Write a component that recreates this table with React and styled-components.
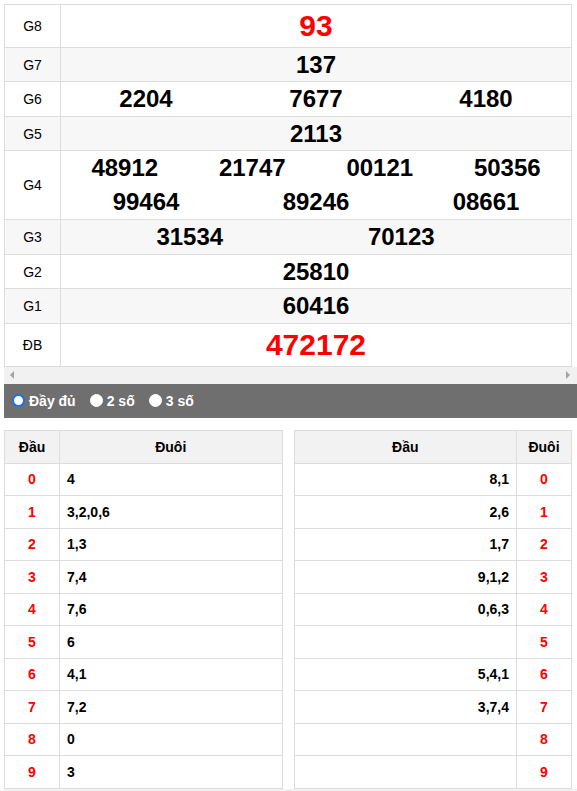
import styled, { createGlobalStyle } from "styled-components";

const GlobalStyle = createGlobalStyle`
  html, body {
    margin: 0;
    padding: 0;
    background: #fff;
    font-family: "Liberation Sans", Arial, sans-serif;
    color: #000;
  }
`;

const Page = styled.div`
  padding: 4px 0 0 4px;
`;

const ScrollBox = styled.div`
  width: 573px;
`;

const Results = styled.div`
  width: 568px;
  border-top: 1px solid #ddd;
`;

const Row = styled.div`
  display: flex;
  border-left: 1px solid #ddd;
  border-bottom: 1px solid #ddd;
  background: ${(p) => (p.$alt ? "#f7f7f7" : "#fff")};
`;

const Label = styled.div`
  width: 56px;
  flex: none;
  box-sizing: border-box;
  border-right: 1px solid #ddd;
  display: flex;
  align-items: center;
  justify-content: center;
  font-size: 14px;
  line-height: 16px;
`;

const Value = styled.div`
  flex: 1;
  border-right: 1px solid #ddd;
`;

const Numbers = styled.div`
  display: grid;
  grid-template-columns: repeat(${(p) => p.$cols}, 1fr);
  padding: ${(p) => p.$pad || "0"};
  text-align: center;
  font-weight: bold;
  font-size: ${(p) => (p.$big ? "30px" : "24px")};
  line-height: ${(p) => (p.$big ? "42px" : p.$lh || "33.45px")};
  color: ${(p) => (p.$big ? "#f00" : "#000")};
`;

const Scrollbar = styled.div`
  height: 17px;
  background: #f1f1f1;
  display: flex;
  align-items: center;
  justify-content: space-between;
  padding: 0 7px 0 6px;
`;

const Arrow = styled.span`
  width: 0;
  height: 0;
  border-top: 4px solid transparent;
  border-bottom: 4px solid transparent;
  ${(p) =>
    p.$right
      ? "border-left: 4px solid #a3a3a3;"
      : "border-right: 4px solid #a3a3a3;"}
`;

const ModeBar = styled.div`
  width: 573px;
  height: 34px;
  background: #6f6f6f;
  display: flex;
  align-items: center;
  gap: 14px;
  padding-left: 8px;
  box-sizing: border-box;
`;

const Option = styled.label`
  display: flex;
  align-items: center;
  gap: 4px;
  color: #fff;
  font-weight: bold;
  font-size: 14px;
`;

const Radio = styled.span`
  width: 13px;
  height: 13px;
  box-sizing: border-box;
  border-radius: 50%;
  background: #fff;
  border: ${(p) => (p.$checked ? "2px solid #1a73e8" : "1px solid #fff")};
`;

const LotoWrap = styled.div`
  display: flex;
  gap: 11px;
  margin-top: 12px;
  width: 568px;
`;

const LotoTable = styled.div`
  width: 279px;
  border-top: 1px solid #ddd;
  border-left: 1px solid #ddd;
  box-sizing: border-box;
`;

const LotoRow = styled.div`
  display: grid;
  grid-template-columns: ${(p) => (p.$rev ? "1fr 55px" : "55px 1fr")};
  height: ${(p) => (p.$head ? "33px" : "32.5px")};
  background: ${(p) => (p.$head ? "#f2f2f2" : "#fff")};
`;

const Cell = styled.div`
  border-right: 1px solid #ddd;
  border-bottom: 1px solid #ddd;
  display: flex;
  align-items: center;
  justify-content: ${(p) => p.$align || "center"};
  padding: 0 7px;
  font-size: 14px;
  font-weight: bold;
  color: ${(p) => (p.$red ? "#f00" : "#000")};
`;

const BottomBar = styled.div`
  height: 17px;
  width: 573px;
  background: #f1f1f1;
`;

const prizes = [
  { label: "G8", lines: [["93"]], big: true },
  { label: "G7", lines: [["137"]] },
  { label: "G6", lines: [["2204", "7677", "4180"]] },
  { label: "G5", lines: [["2113"]] },
  {
    label: "G4",
    lines: [
      ["48912", "21747", "00121", "50356"],
      ["99464", "89246", "08661"],
    ],
    lh: "34px",
  },
  { label: "G3", lines: [["31534", "70123"]], pad: "0 64px 0 23px" },
  { label: "G2", lines: [["25810"]] },
  { label: "G1", lines: [["60416"]] },
  { label: "ĐB", lines: [["472172"]], big: true },
];

const heads = ["4", "3,2,0,6", "1,3", "7,4", "7,6", "6", "4,1", "7,2", "0", "3"];
const tails = ["8,1", "2,6", "1,7", "9,1,2", "0,6,3", "", "5,4,1", "3,7,4", "", ""];

export default function App() {
  return (
    <Page>
      <GlobalStyle />
      <ScrollBox>
        <Results>
          {prizes.map((p, i) => (
            <Row key={p.label} $alt={i % 2 === 1}>
              <Label>{p.label}</Label>
              <Value>
                {p.lines.map((line, j) => (
                  <Numbers
                    key={j}
                    $cols={line.length}
                    $big={p.big}
                    $lh={p.lh}
                    $pad={p.pad}
                  >
                    {line.map((n) => (
                      <span key={n}>{n}</span>
                    ))}
                  </Numbers>
                ))}
              </Value>
            </Row>
          ))}
        </Results>
        <Scrollbar>
          <Arrow />
          <Arrow $right />
        </Scrollbar>
      </ScrollBox>

      <ModeBar>
        <Option>
          <Radio $checked />
          Đầy đủ
        </Option>
        <Option>
          <Radio />2 số
        </Option>
        <Option>
          <Radio />3 số
        </Option>
      </ModeBar>

      <LotoWrap>
        <LotoTable>
          <LotoRow $head>
            <Cell>Đầu</Cell>
            <Cell>Đuôi</Cell>
          </LotoRow>
          {heads.map((v, i) => (
            <LotoRow key={i}>
              <Cell $red>{i}</Cell>
              <Cell $align="flex-start">{v}</Cell>
            </LotoRow>
          ))}
        </LotoTable>
        <LotoTable>
          <LotoRow $head $rev>
            <Cell>Đầu</Cell>
            <Cell>Đuôi</Cell>
          </LotoRow>
          {tails.map((v, i) => (
            <LotoRow key={i} $rev>
              <Cell $align="flex-end">{v}</Cell>
              <Cell $red>{i}</Cell>
            </LotoRow>
          ))}
        </LotoTable>
      </LotoWrap>
      <BottomBar />
    </Page>
  );
}
